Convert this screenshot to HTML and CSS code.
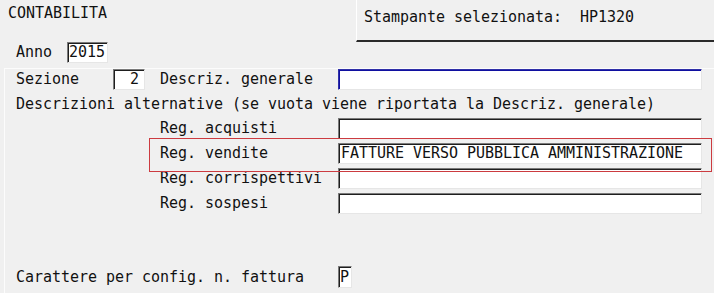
FILE: index.html
```html
<!DOCTYPE html>
<html lang="it">
<head>
<meta charset="utf-8">
<title>Contabilita</title>
<link rel="stylesheet" href="styles.css">
</head>
<body>
<div class="screen">
  <header class="top">
    <div class="title">CONTABILITA</div>
    <div class="printer">Stampante selezionata:&nbsp; HP1320</div>
  </header>
  <div class="anno-row">
    <span class="lbl lbl-anno">Anno</span>
    <span class="field f-anno">2015</span>
  </div>
  <section class="group">
    <div class="row">
      <span class="lbl lbl-sez">Sezione</span>
      <span class="field f-sez">2</span>
      <span class="lbl lbl-desc">Descriz. generale</span>
      <span class="field f-wide focus"></span>
    </div>
    <div class="note">Descrizioni alternative (se vuota viene riportata la Descriz. generale)</div>
    <div class="alt">
      <div class="row alt-row">
        <span class="lbl lbl-desc">Reg. acquisti</span>
        <span class="field f-wide"></span>
      </div>
      <div class="row alt-row">
        <span class="lbl lbl-desc">Reg. vendite</span>
        <span class="field f-wide">FATTURE VERSO PUBBLICA AMMINISTRAZIONE</span>
      </div>
      <div class="row alt-row">
        <span class="lbl lbl-desc">Reg. corrispettivi</span>
        <span class="field f-wide"></span>
      </div>
      <div class="row alt-row">
        <span class="lbl lbl-desc">Reg. sospesi</span>
        <span class="field f-wide"></span>
      </div>
    </div>
    <div class="row last-row">
      <span class="lbl lbl-car">Carattere per config. n. fattura</span>
      <span class="field f-car">P</span>
    </div>
  </section>
  <div class="highlight"></div>
</div>
</body>
</html>
```
FILE: styles.css
```css
html, body {
  margin: 0;
  padding: 0;
}
body {
  background: #f0f0f0;
  font-family: "DejaVu Sans Mono", "Liberation Mono", monospace;
  font-size: 15px;
  letter-spacing: -0.03px;
  color: #111;
  width: 714px;
  height: 293px;
  overflow: hidden;
}
.screen {
  position: relative;
  width: 714px;
  height: 293px;
}
.top {
  display: flex;
  height: 42px;
}
.title {
  width: 348px;
  padding: 5px 0 0 8px;
  line-height: 16px;
}
.printer {
  flex: 1;
  border-left: 1px solid #ffffff;
  border-bottom: 2px solid #2a2a2a;
  box-sizing: border-box;
  height: 42px;
  padding: 9px 0 0 7px;
  line-height: 16px;
}
.anno-row {
  display: flex;
  align-items: center;
  height: 21px;
  padding-left: 16px;
}
.lbl {
  white-space: pre;
  line-height: 21px;
}
.lbl-anno { width: 51px; }
.field {
  box-sizing: border-box;
  height: 21px;
  background: #fff;
  border-top: 1px solid #7a7a7a;
  border-left: 1px solid #7a7a7a;
  border-right: 1px solid #e6e6e6;
  border-bottom: 1px solid #e6e6e6;
  box-shadow: inset 1px 1px 0 #1e1e1e;
  padding: 0 0 0 2px;
  line-height: 19px;
  white-space: pre;
  overflow: hidden;
}
.f-anno { width: 41px; padding-left: 1px; }
.group {
  margin: 5px 0 0 4px;
  border-top: 1px solid #fcfcfc;
  border-left: 1px solid #fcfcfc;
  padding-left: 11px;
  height: 226px;
}
.row {
  display: flex;
  align-items: center;
  height: 21px;
}
.lbl-sez { width: 97px; }
.f-sez {
  width: 32px;
  text-align: right;
  padding-right: 5px;
}
.lbl-desc { width: 178px; margin-left: 15px; }
.f-wide { width: 364px; }
.focus {
  border-top: 1px solid #3030a8;
  border-left: 1px solid #3030a8;
  box-shadow: inset 1px 1px 0 #1010a0;
}
.note {
  height: 27px;
  line-height: 27px;
  margin-top: 1px;
}
.alt {
  display: flex;
  flex-direction: column;
  gap: 4px;
  padding-left: 129px;
}
.alt-row { height: 21px; }
.last-row {
  margin-top: 52px;
  height: 22px;
}
.lbl-car { width: 322px; }
.f-car {
  width: 14px;
  height: 22px;
  padding-left: 1px;
  line-height: 21px;
}
.highlight {
  position: absolute;
  left: 149px;
  top: 138px;
  width: 563px;
  height: 34px;
  box-sizing: border-box;
  border: 1px solid #cc3b40;
  pointer-events: none;
}
```
